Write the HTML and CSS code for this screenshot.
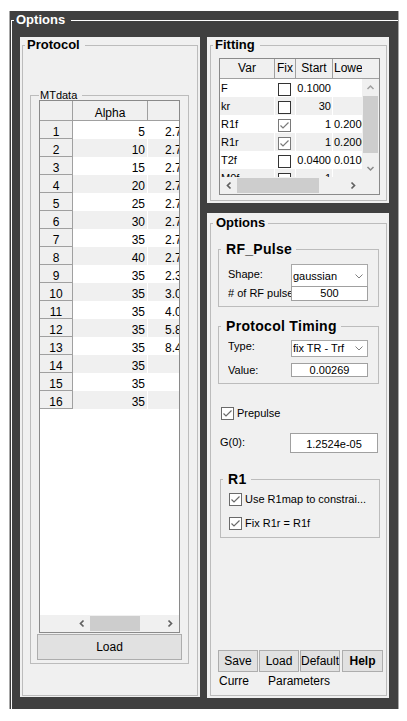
FILE: index.html
```html
<!DOCTYPE html>
<html>
<head>
<meta charset="utf-8">
<title>Options</title>
<link rel="stylesheet" href="styles.css">
</head>
<body>
<div class="shell">
  <fieldset class="frame">
    <legend class="frame-legend">Options</legend>
    <div class="cols">
      <div class="panel panel-left">
        <fieldset class="grp grp-fill">
          <legend class="lg-panel">Protocol</legend>
          <fieldset class="grp mtdata">
            <legend class="lg-small">MTdata</legend>
            <div class="mt">
              <div class="mhead"><div class="mh-idx"></div><div class="mh-alpha">Alpha</div><div class="mh-more"></div></div>
              <div class="mrow"><div class="c-idx">1</div><div class="c-alpha">5</div><div class="c-more">2.7000</div></div>
              <div class="mrow alt"><div class="c-idx">2</div><div class="c-alpha">10</div><div class="c-more">2.7000</div></div>
              <div class="mrow"><div class="c-idx">3</div><div class="c-alpha">15</div><div class="c-more">2.7000</div></div>
              <div class="mrow alt"><div class="c-idx">4</div><div class="c-alpha">20</div><div class="c-more">2.7000</div></div>
              <div class="mrow"><div class="c-idx">5</div><div class="c-alpha">25</div><div class="c-more">2.7000</div></div>
              <div class="mrow alt"><div class="c-idx">6</div><div class="c-alpha">30</div><div class="c-more">2.7000</div></div>
              <div class="mrow"><div class="c-idx">7</div><div class="c-alpha">35</div><div class="c-more">2.7000</div></div>
              <div class="mrow alt"><div class="c-idx">8</div><div class="c-alpha">40</div><div class="c-more">2.7000</div></div>
              <div class="mrow"><div class="c-idx">9</div><div class="c-alpha">35</div><div class="c-more">2.3000</div></div>
              <div class="mrow alt"><div class="c-idx">10</div><div class="c-alpha">35</div><div class="c-more">3.0000</div></div>
              <div class="mrow"><div class="c-idx">11</div><div class="c-alpha">35</div><div class="c-more">4.0000</div></div>
              <div class="mrow alt"><div class="c-idx">12</div><div class="c-alpha">35</div><div class="c-more">5.8000</div></div>
              <div class="mrow"><div class="c-idx">13</div><div class="c-alpha">35</div><div class="c-more">8.4000</div></div>
              <div class="mrow alt"><div class="c-idx">14</div><div class="c-alpha">35</div><div class="c-more"></div></div>
              <div class="mrow"><div class="c-idx">15</div><div class="c-alpha">35</div><div class="c-more"></div></div>
              <div class="mrow alt"><div class="c-idx">16</div><div class="c-alpha">35</div><div class="c-more"></div></div>
              <div class="mfill"></div>
              <div class="mscroll">
                <div class="ms-side"></div>
                <div class="sb-btn"><svg width="17" height="17" viewBox="0 0 17 17"><path d="M10.5 5.5 L7.5 8.5 L10.5 11.5" fill="none" stroke="#606060" stroke-width="1.7"/></svg></div>
                <div class="ms-thumb"></div>
                <div class="sb-track"></div>
                <div class="sb-btn"><svg width="17" height="17" viewBox="0 0 17 17"><path d="M6.5 5.5 L9.5 8.5 L6.5 11.5" fill="none" stroke="#606060" stroke-width="1.7"/></svg></div>
              </div>
            </div>
            <button class="btn-load">Load</button>
          </fieldset>
        </fieldset>
      </div>

      <div class="right-col">
        <div class="panel panel-fit">
          <fieldset class="grp grp-fill">
            <legend class="lg-panel">Fitting</legend>
            <div class="ft">
              <div class="fhead">
                <div class="fh fh-var">Var</div>
                <div class="fh fh-fix">Fix</div>
                <div class="fh fh-start">Start</div>
                <div class="fh fh-low">Lower</div>
                <div class="fh-rest"></div>
              </div>
              <div class="fbody">
                <div class="fview">
                  <div class="frow"><div class="f-var">F</div><div class="f-fix"><svg class="chk" width="13" height="13" viewBox="0 0 13 13"><rect x="0.5" y="0.5" width="12" height="12" fill="#fff" stroke="#333"/></svg></div><div class="f-start">0.1000</div><div class="f-low"></div></div>
                  <div class="frow alt"><div class="f-var">kr</div><div class="f-fix"><svg class="chk" width="13" height="13" viewBox="0 0 13 13"><rect x="0.5" y="0.5" width="12" height="12" fill="#fff" stroke="#333"/></svg></div><div class="f-start">30</div><div class="f-low"></div></div>
                  <div class="frow"><div class="f-var">R1f</div><div class="f-fix"><svg class="chk" width="13" height="13" viewBox="0 0 13 13"><rect x="0.5" y="0.5" width="12" height="12" fill="#fff" stroke="#7a7a7a"/><path d="M2.5 6.5 L5 9 L10.5 3.5" fill="none" stroke="#7a7a7a" stroke-width="1.2"/></svg></div><div class="f-start">1</div><div class="f-low">0.2000</div></div>
                  <div class="frow alt"><div class="f-var">R1r</div><div class="f-fix"><svg class="chk" width="13" height="13" viewBox="0 0 13 13"><rect x="0.5" y="0.5" width="12" height="12" fill="#fff" stroke="#7a7a7a"/><path d="M2.5 6.5 L5 9 L10.5 3.5" fill="none" stroke="#7a7a7a" stroke-width="1.2"/></svg></div><div class="f-start">1</div><div class="f-low">0.2000</div></div>
                  <div class="frow"><div class="f-var">T2f</div><div class="f-fix"><svg class="chk" width="13" height="13" viewBox="0 0 13 13"><rect x="0.5" y="0.5" width="12" height="12" fill="#fff" stroke="#333"/></svg></div><div class="f-start">0.0400</div><div class="f-low">0.0100</div></div>
                  <div class="frow alt"><div class="f-var">M0f</div><div class="f-fix"><svg class="chk" width="13" height="13" viewBox="0 0 13 13"><rect x="0.5" y="0.5" width="12" height="12" fill="#fff" stroke="#333"/></svg></div><div class="f-start">1</div><div class="f-low"></div></div>
                </div>
                <div class="vs">
                  <div class="sb-btn"><svg width="17" height="17" viewBox="0 0 17 17"><path d="M5.5 10 L8.5 7 L11.5 10" fill="none" stroke="#a0a0a0" stroke-width="1.5"/></svg></div>
                  <div class="vs-thumb"></div>
                  <div class="sb-track"></div>
                  <div class="sb-btn"><svg width="17" height="17" viewBox="0 0 17 17"><path d="M5.5 7 L8.5 10 L11.5 7" fill="none" stroke="#8a8a8a" stroke-width="1.5"/></svg></div>
                </div>
              </div>
              <div class="fbottom">
                <div class="hs">
                  <div class="sb-btn"><svg width="17" height="17" viewBox="0 0 17 17"><path d="M10.5 5.5 L7.5 8.5 L10.5 11.5" fill="none" stroke="#606060" stroke-width="1.7"/></svg></div>
                  <div class="hs-thumb"></div>
                  <div class="sb-track"></div>
                  <div class="sb-btn"><svg width="17" height="17" viewBox="0 0 17 17"><path d="M6.5 5.5 L9.5 8.5 L6.5 11.5" fill="none" stroke="#606060" stroke-width="1.7"/></svg></div>
                </div>
                <div class="corner"></div>
              </div>
            </div>
          </fieldset>
        </div>

        <div class="panel panel-opt">
          <fieldset class="grp grp-fill">
            <legend class="lg-panel lg-opt">Options</legend>

            <fieldset class="grp sub rf">
              <legend class="lg-sub">RF_Pulse</legend>
              <div class="form form-rf">
                <div class="lbl lbl-shape">Shape:</div>
                <div class="sel sel-open">
                  <span class="sel-text">gaussian</span>
                  <span class="sel-arrow"><svg width="8" height="5" viewBox="0 0 8 5"><path d="M0.5 0.5 L4 4 L7.5 0.5" fill="none" stroke="#808080" stroke-width="1"/></svg></span>
                </div>
                <div class="lbl lbl-pulse"># of RF pulse</div>
                <div class="inp inp-pulse">500</div>
              </div>
            </fieldset>

            <fieldset class="grp sub pt">
              <legend class="lg-sub">Protocol Timing</legend>
              <div class="form form-pt">
                <div class="lbl">Type:</div>
                <div class="sel">
                  <span class="sel-text">fix TR - Trf</span>
                  <span class="sel-arrow"><svg width="8" height="5" viewBox="0 0 8 5"><path d="M0.5 0.5 L4 4 L7.5 0.5" fill="none" stroke="#808080" stroke-width="1"/></svg></span>
                </div>
                <div class="lbl lbl-value">Value:</div>
                <div class="inp inp-value">0.00269</div>
              </div>
            </fieldset>

            <div class="check-row prepulse">
              <svg class="chk" width="13" height="13" viewBox="0 0 13 13"><rect x="0.5" y="0.5" width="12" height="12" fill="#fff" stroke="#6a6a6a"/><path d="M2.5 6.5 L5 9 L10.5 3.5" fill="none" stroke="#6a6a6a" stroke-width="1.2"/></svg>
              <span>Prepulse</span>
            </div>

            <div class="g0">
              <div class="g0-lbl">G(0):</div>
              <div class="g0-inp">1.2524e-05</div>
            </div>

            <fieldset class="grp r1">
              <legend class="lg-sub">R1</legend>
              <div class="r1-body">
                <div class="check-row">
                  <svg class="chk" width="13" height="13" viewBox="0 0 13 13"><rect x="0.5" y="0.5" width="12" height="12" fill="#fff" stroke="#6a6a6a"/><path d="M2.5 6.5 L5 9 L10.5 3.5" fill="none" stroke="#6a6a6a" stroke-width="1.2"/></svg>
                  <span>Use R1map to constrai...</span>
                </div>
                <div class="check-row">
                  <svg class="chk" width="13" height="13" viewBox="0 0 13 13"><rect x="0.5" y="0.5" width="12" height="12" fill="#fff" stroke="#6a6a6a"/><path d="M2.5 6.5 L5 9 L10.5 3.5" fill="none" stroke="#6a6a6a" stroke-width="1.2"/></svg>
                  <span>Fix R1r = R1f</span>
                </div>
              </div>
            </fieldset>

            <div class="btns">
              <button class="btn">Save</button>
              <button class="btn btn-next">Load</button>
              <button class="btn btn-next">Default</button>
              <button class="btn btn-help">Help</button>
            </div>
            <div class="curr-row">
              <span class="curr">Curre</span>
              <span>Parameters</span>
            </div>
          </fieldset>
        </div>
      </div>
    </div>
  </fieldset>
</div>
</body>
</html>
```

FILE: styles.css
```css
* { box-sizing: border-box; }
html, body { margin: 0; padding: 0; background: #fff; }
body { font-family: "Liberation Sans", Arial, sans-serif; font-size: 12px; color: #000; }

/* outer dark frame */
.shell {
  margin: 11px 0 0 9px;
  width: 390px;
  height: 698px;
  padding-left: 1px;
  background: #404040;
  border-left: 1px solid #a8a8a8;
  border-right: 1px solid #a8a8a8;
}
.frame {
  margin: 0;
  padding: 0;
  min-width: 0;
  height: 698px;
  border: 0;
  border-top: 1px solid #fff;
  border-left: 1px solid #fff;
}
.frame-legend {
  margin-left: 2px;
  padding: 0 6px 0 2px;
  font-weight: bold;
  font-size: 13px;
  line-height: 18px;
  color: #fff;
}
.cols { display: flex; gap: 7px; padding: 8px 0 0 8px; }

/* panels */
.panel { background: #f0f0f0; }
.panel-left { width: 180px; height: 660px; padding: 0 2px 1px 2px; }
.right-col { display: flex; flex-direction: column; gap: 10px; width: 182px; }
.panel-fit { height: 166px; padding: 0 2px 2px 3px; }
.panel-opt { height: 485px; padding: 2px 2px 2px 3px; }

/* group boxes */
.grp { margin: 0; padding: 0; min-width: 0; border: 1px solid #bcbcbc; }
.grp-fill { height: 100%; }
.lg-panel {
  margin-left: 2px;
  padding: 0 5px 0 2px;
  font-weight: bold;
  font-size: 13px;
  line-height: 16px;
}
.lg-opt { padding: 0 3px 0 3px; }
.lg-sub {
  margin-left: 2px;
  padding: 0 4px 0 5px;
  font-weight: bold;
  font-size: 14px;
  line-height: 16px;
  letter-spacing: 0.3px;
}
.lg-small {
  margin-left: 0;
  padding: 0 5px 0 1px;
  font-size: 11px;
  line-height: 10px;
}

/* MTdata table */
.mtdata { width: 159px; margin: 37px 0 0 7px; padding: 0 8px 3px 8px; }
.mt {
  display: flex;
  flex-direction: column;
  height: 533px;
  border: 1px solid #8a8a8a;
  background: #fff;
  overflow: hidden;
  font-size: 12px;
}
.mhead { display: flex; flex: none; height: 20px; background: #f0f0f0; border-bottom: 1px solid #a0a0a0; }
.mh-idx { width: 33px; border-right: 1px solid #a0a0a0; }
.mh-alpha { width: 75px; border-right: 1px solid #a0a0a0; text-align: center; padding-top: 5px; line-height: 14px; }
.mh-more { flex: 1; }
.mrow { display: flex; flex: none; height: 18px; }
.c-idx {
  width: 33px;
  background: #f0f0f0;
  border-right: 1px solid #a0a0a0;
  border-bottom: 1px solid #a0a0a0;
  text-align: center;
  padding-top: 4px;
  line-height: 14px;
}
.c-alpha {
  width: 75px;
  border-right: 1px solid #fff;
  text-align: right;
  padding: 4px 2px 0 0;
  line-height: 14px;
}
.c-more {
  flex: 1;
  padding: 4px 0 0 17px;
  line-height: 14px;
  white-space: nowrap;
  overflow: hidden;
}
.mrow.alt .c-alpha, .mrow.alt .c-more { background: #f0f0f0; }
.mfill { flex: 1; }
.mscroll { display: flex; flex: none; height: 17px; background: #f0f0f0; }
.ms-side { width: 33px; }
.ms-thumb { width: 50px; margin: 1px 0; background: #cdcdcd; }

.sb-btn { flex: none; width: 17px; height: 17px; display: flex; align-items: center; justify-content: center; }
.sb-btn svg { display: block; }
.sb-track { flex: 1; }

.btn-load {
  display: block;
  width: 145px;
  height: 26px;
  margin: 1px 0 0 -2px;
  padding: 0;
  background: #e1e1e1;
  border: 1px solid #adadad;
  font-family: "Liberation Sans", Arial, sans-serif;
  font-size: 12px;
  color: #000;
}

/* Fitting table */
.ft {
  display: flex;
  flex-direction: column;
  width: 161px;
  height: 137px;
  margin: 5px 0 0 8px;
  border: 1px solid #8a8a8a;
  background: #fff;
  font-size: 11px;
}
.fhead { display: flex; flex: none; height: 20px; background: #f0f0f0; border-bottom: 1px solid #a0a0a0; line-height: 18px; font-size: 12px; }
.fh { overflow: hidden; white-space: nowrap; text-align: center; }
.fh-var { width: 55px; border-right: 1px solid #a0a0a0; }
.fh-fix { width: 21px; border-right: 1px solid #a0a0a0; }
.fh-start { width: 37px; border-right: 1px solid #a0a0a0; }
.fh-low { width: 29px; text-align: left; padding-left: 1px; }
.fh-rest { flex: 1; }
.fbody { display: flex; flex: none; height: 98px; }
.fview { width: 142px; overflow: hidden; }
.frow { display: flex; height: 18px; line-height: 18px; }
.frow.alt { background: #f0f0f0; }
.f-var { width: 55px; padding-left: 1px; border-right: 1px solid #fff; }
.f-fix { width: 21px; padding: 4px 0 0 3px; border-right: 1px solid #fff; }
.f-start { width: 37px; text-align: right; padding-right: 1px; border-right: 1px solid #fff; }
.f-low { width: 29px; padding-left: 1px; white-space: nowrap; overflow: hidden; }
.chk { display: block; flex: none; }
.vs { display: flex; flex-direction: column; width: 17px; background: #f0f0f0; }
.vs-thumb { flex: none; height: 57px; margin: 0 1px; background: #cdcdcd; }
.fbottom { display: flex; flex: none; height: 17px; }
.hs { display: flex; width: 142px; background: #f0f0f0; }
.hs-thumb { width: 82px; margin: 1px 0; background: #cdcdcd; }
.corner { flex: 1; background: #f0f0f0; }

/* Options forms */
.rf { width: 161px; margin: 10px 0 0 7px; }
.pt { width: 161px; margin: 11px 0 0 7px; }
.form { display: grid; grid-template-columns: 63px 77px; font-size: 11px; line-height: 13px; }
.form-rf { grid-template-rows: 22px 15px; padding: 7px 0 5px 9px; }
.form-pt { grid-template-rows: 17px 14px; row-gap: 6px; padding: 6px 0 6px 9px; }
.lbl { white-space: nowrap; overflow: hidden; }
.lbl-shape { padding-top: 4px; }
.lbl-pulse { padding-top: 1px; }
.lbl-value { padding-top: 1px; }
.sel {
  display: flex;
  align-items: center;
  padding-left: 1px;
  background: #fff;
  border: 1px solid #a8a8a8;
}
.sel-open { border-bottom: 0; padding-top: 1px; }
.sel-text { flex: 1; white-space: nowrap; overflow: hidden; }
.sel-arrow { width: 16px; display: flex; justify-content: center; }
.sel-arrow svg { display: block; }
.inp { background: #fff; border: 1px solid #a0a0a0; text-align: center; white-space: nowrap; }
.inp-value { line-height: 12px; }

.check-row { display: flex; align-items: center; gap: 3px; font-size: 11px; line-height: 13px; white-space: nowrap; }
.prepulse { margin: 23px 0 0 10px; }
.g0 { display: flex; margin: 13px 0 0 9px; font-size: 11px; line-height: 13px; }
.g0-lbl { width: 70px; padding-top: 3px; }
.g0-inp { width: 88px; height: 20px; padding-top: 1px; line-height: 18px; text-align: center; background: #fff; border: 1px solid #a0a0a0; }

.r1 { width: 160px; margin: 18px 0 0 9px; }
.r1-body { display: flex; flex-direction: column; gap: 11px; padding: 6px 0 7px 8px; }

.btns { display: flex; margin: 112px 0 0 7px; }
.btn {
  width: 40px;
  height: 22px;
  padding: 0;
  background: #e1e1e1;
  border: 1px solid #adadad;
  font-family: "Liberation Sans", Arial, sans-serif;
  font-size: 12px;
  color: #000;
  white-space: nowrap;
}
.btn-next { margin-left: 1px; }
.btn-help { width: 41px; margin-left: 2px; font-weight: bold; }
.curr-row { display: flex; margin: 2px 0 0 8px; font-size: 12px; line-height: 14px; }
.curr { width: 49px; }
```
